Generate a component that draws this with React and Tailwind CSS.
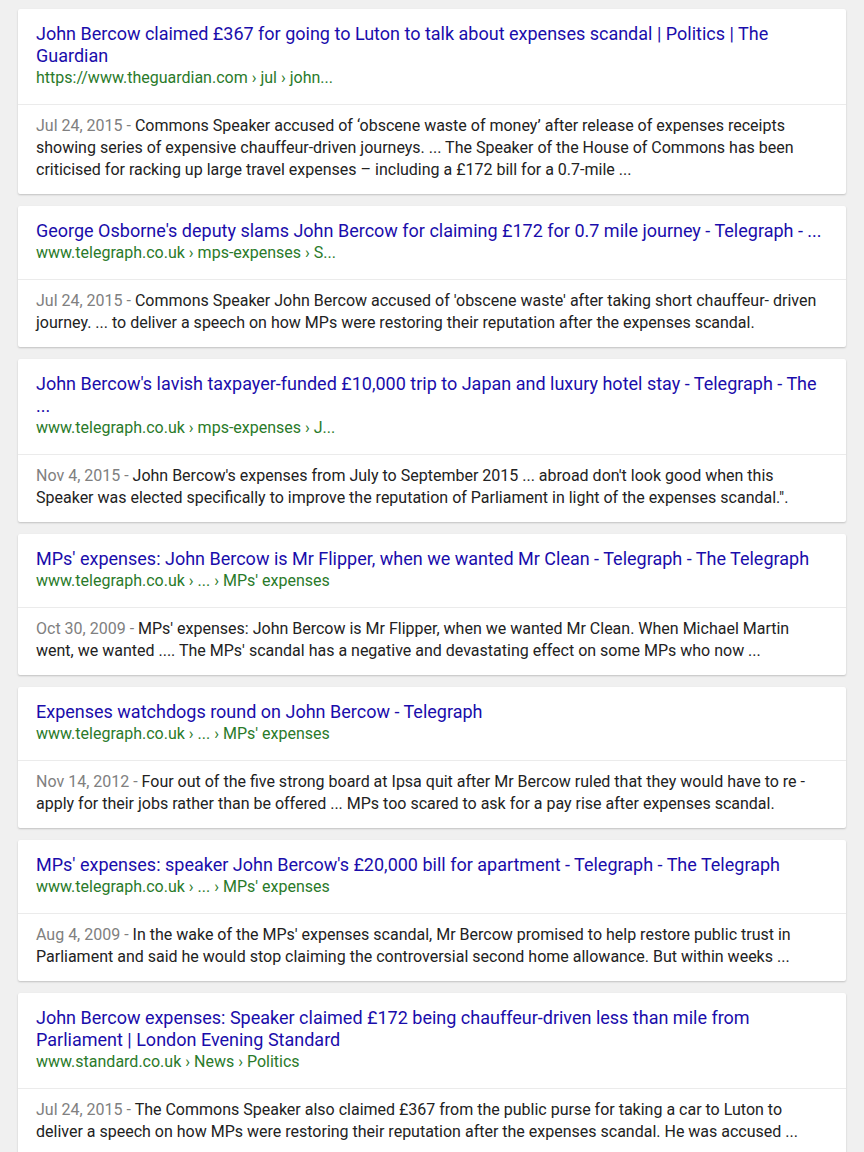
const items = [
  {t:"John Bercow claimed £367 for going to Luton to talk about expenses scandal | Politics | The Guardian",u:"https://www.theguardian.com › jul › john...",d:"Jul 24, 2015",s:"Commons Speaker accused of ‘obscene waste of money’ after release of expenses receipts showing series of expensive chauffeur-driven journeys. ... The Speaker of the House of Commons has been criticised for racking up large travel expenses – including a £172 bill for a 0.7-mile ..."},
  {t:"George Osborne's deputy slams John Bercow for claiming £172 for 0.7 mile journey - Telegraph - ...",u:"www.telegraph.co.uk › mps-expenses › S...",d:"Jul 24, 2015",s:"Commons Speaker John Bercow accused of 'obscene waste' after taking short chauffeur- driven journey. ... to deliver a speech on how MPs were restoring their reputation after the expenses scandal."},
  {t:"John Bercow's lavish taxpayer-funded £10,000 trip to Japan and luxury hotel stay - Telegraph - The ...",u:"www.telegraph.co.uk › mps-expenses › J...",d:"Nov 4, 2015",s:"John Bercow's expenses from July to September 2015 ... abroad don't look good when this Speaker was elected specifically to improve the reputation of Parliament in light of the expenses scandal.\"."},
  {t:"MPs' expenses: John Bercow is Mr Flipper, when we wanted Mr Clean - Telegraph - The Telegraph",u:"www.telegraph.co.uk › ... › MPs' expenses",d:"Oct 30, 2009",s:"MPs' expenses: John Bercow is Mr Flipper, when we wanted Mr Clean. When Michael Martin went, we wanted .... The MPs' scandal has a negative and devastating effect on some MPs who now ..."},
  {t:"Expenses watchdogs round on John Bercow - Telegraph",u:"www.telegraph.co.uk › ... › MPs' expenses",d:"Nov 14, 2012",s:"Four out of the five strong board at Ipsa quit after Mr Bercow ruled that they would have to re - apply for their jobs rather than be offered ... MPs too scared to ask for a pay rise after expenses scandal."},
  {t:"MPs' expenses: speaker John Bercow's £20,000 bill for apartment - Telegraph - The Telegraph",u:"www.telegraph.co.uk › ... › MPs' expenses",d:"Aug 4, 2009",s:"In the wake of the MPs' expenses scandal, Mr Bercow promised to help restore public trust in Parliament and said he would stop claiming the controversial second home allowance. But within weeks ..."},
  {t:"John Bercow expenses: Speaker claimed £172 being chauffeur-driven less than mile from Parliament | London Evening Standard",u:"www.standard.co.uk › News › Politics",d:"Jul 24, 2015",s:"The Commons Speaker also claimed £367 from the public purse for taking a car to Luton to deliver a speech on how MPs were restoring their reputation after the expenses scandal. He was accused ..."},
];
export default function App(){
  return (
    <div className="min-h-[1152px] bg-[#f0f0f0] px-[18px] pt-[9px] flex flex-col gap-[12px]" style={{fontFamily:"Roboto, sans-serif"}}>
      {items.map((it,i)=>(
        <div key={i} className="bg-white rounded-[2px] shadow-[0_1px_2px_rgba(0,0,0,0.2)]">
          <div className="px-[18px] pt-[14px] pb-[15px] border-b border-[#ebebeb]">
            <div className="text-[18px] leading-[22px] text-[#1a0dab]">{it.t}</div>
            <div className="text-[16px] leading-[22px] text-[#2a7a2a]">{it.u}</div>
          </div>
          <div className="px-[18px] pt-[10px] pb-[13px] text-[16px] leading-[22px] text-[#222]">
            <span className="text-[#808080]">{it.d} - </span>{it.s}
          </div>
        </div>
      ))}
    </div>
  );
}
